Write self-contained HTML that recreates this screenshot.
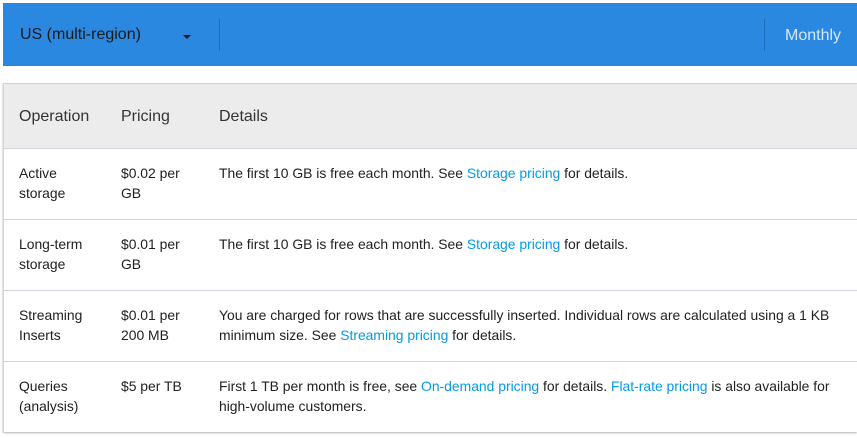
<!DOCTYPE html>
<html><head><style>
*{margin:0;padding:0;box-sizing:border-box}
body{width:857px;height:438px;background:#fff;font-family:"Liberation Sans",sans-serif;font-size:14px;color:#212121;position:relative;overflow:hidden}
.bar{position:absolute;left:3px;top:3px;width:854px;height:63px;background:#2a88e0}
.bar .sel{position:absolute;left:17px;top:23px;font-size:16px;color:#1a1a1a}
.bar .arr{position:absolute;left:180px;top:32px;width:0;height:0;border-left:4px solid transparent;border-right:4px solid transparent;border-top:4px solid #1a1a1a}
.bar .d1{position:absolute;left:216px;top:16px;width:1px;height:32px;background:#1f6fb8}
.bar .d2{position:absolute;left:761px;top:16px;width:1px;height:32px;background:#1f6fb8}
.bar .m{position:absolute;left:782px;top:24px;font-size:16px;color:#d6e8fa}
.tbl{position:absolute;left:3px;top:83px;width:854px;height:349px;border-left:1px solid #d4d4d4;border-top:1px solid #d4d4d4;box-shadow:0 1px 2px rgba(0,0,0,.3)}
.hd{position:absolute;left:0;top:0;width:100%;height:65px;background:#ececec;border-bottom:1px solid #d0d6dc}
.hd span{position:absolute;top:24px;font-size:16px;color:#333}
.row{position:absolute;left:0;width:100%;height:71px;border-bottom:1px solid #d0d6dc;line-height:20px;font-size:13.9px}
.row div{position:absolute;top:14px}
.c1{left:15px}.c2{left:117px}.c3{left:215px;width:630px}
a{color:#039be5;text-decoration:none}
</style></head><body>
<div class="bar"><div class="sel">US (multi-region)</div><div class="arr"></div><div class="d1"></div><div class="d2"></div><div class="m">Monthly</div></div>
<div class="tbl">
<div class="hd"><span style="left:15px">Operation</span><span style="left:117px">Pricing</span><span style="left:215px">Details</span></div>
<div class="row" style="top:65px"><div class="c1">Active<br>storage</div><div class="c2">$0.02 per<br>GB</div><div class="c3">The first 10 GB is free each month. See <a>Storage pricing</a> for details.</div></div>
<div class="row" style="top:136px"><div class="c1">Long-term<br>storage</div><div class="c2">$0.01 per<br>GB</div><div class="c3">The first 10 GB is free each month. See <a>Storage pricing</a> for details.</div></div>
<div class="row" style="top:207px"><div class="c1">Streaming<br>Inserts</div><div class="c2">$0.01 per<br>200 MB</div><div class="c3">You are charged for rows that are successfully inserted. Individual rows are calculated using a 1 KB<br>minimum size. See <a>Streaming pricing</a> for details.</div></div>
<div class="row" style="top:278px;border-bottom:none"><div class="c1">Queries<br>(analysis)</div><div class="c2">$5 per TB</div><div class="c3">First 1 TB per month is free, see <a>On-demand pricing</a> for details. <a>Flat-rate pricing</a> is also available for<br>high-volume customers.</div></div>
</div>
</body></html>
